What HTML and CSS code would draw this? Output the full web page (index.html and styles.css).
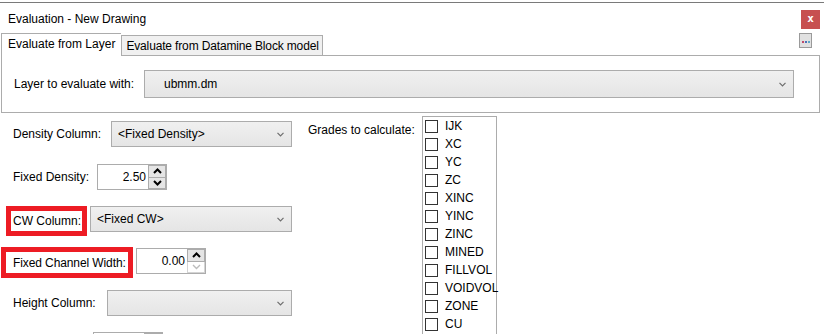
FILE: index.html
```html
<!DOCTYPE html>
<html lang="en">
<head>
  <meta charset="UTF-8" />
  <title>Evaluation - New Drawing</title>
  <link rel="stylesheet" href="styles.css">
</head>
<body>
  <div class="window">
    <div class="titlebar">
      <span class="title">Evaluation - New Drawing</span>
      <button class="close" title="Close">x</button>
    </div>

    <div class="tabs">
      <div class="tab active">Evaluate from Layer</div>
      <div class="tab">Evaluate from Datamine Block model</div>
      <button class="more" title="More"><i class="d1"></i><i class="d2"></i><i class="d3"></i></button>
    </div>

    <div class="panel">
      <span class="label layer-label">Layer to evaluate with:</span>
      <div class="combo wide"><span>ubmm.dm</span><svg class="chev" width="7" height="5" viewBox="0 0 7 5"><path d="M0.5 0.8 L3.5 3.8 L6.5 0.8" fill="none" stroke="#6d6d6d" stroke-width="1.2"/></svg></div>
    </div>

    <div class="content">
      <div class="form">
        <div class="row r-density">
          <span class="label">Density Column:</span>
          <div class="combo c-density"><span>&lt;Fixed Density&gt;</span><svg class="chev" width="7" height="5" viewBox="0 0 7 5"><path d="M0.5 0.8 L3.5 3.8 L6.5 0.8" fill="none" stroke="#6d6d6d" stroke-width="1.2"/></svg></div>
        </div>

        <div class="row r-fixed">
          <span class="label">Fixed Density:</span>
          <div class="spin s-density">
            <span class="value">2.50</span>
            <div class="arrows">
              <span class="arrow"><svg width="9" height="6" viewBox="0 0 9 6"><path d="M1 5 L4.5 1.5 L8 5" fill="none" stroke="#000" stroke-width="2"/></svg></span>
              <span class="arrow"><svg width="9" height="6" viewBox="0 0 9 6"><path d="M1 1 L4.5 4.5 L8 1" fill="none" stroke="#000" stroke-width="2"/></svg></span>
            </div>
          </div>
        </div>

        <div class="row r-cw">
          <span class="label marked m-cw">CW Column:</span>
          <div class="combo c-cw"><span>&lt;Fixed CW&gt;</span><svg class="chev" width="7" height="5" viewBox="0 0 7 5"><path d="M0.5 0.8 L3.5 3.8 L6.5 0.8" fill="none" stroke="#6d6d6d" stroke-width="1.2"/></svg></div>
        </div>

        <div class="row r-fcw">
          <span class="label marked m-fcw">Fixed Channel Width:</span>
          <div class="spin s-fcw">
            <span class="value">0.00</span>
            <div class="arrows">
              <span class="arrow"><svg width="9" height="6" viewBox="0 0 9 6"><path d="M1 5 L4.5 1.5 L8 5" fill="none" stroke="#000" stroke-width="2"/></svg></span>
              <span class="arrow off"><svg width="9" height="6" viewBox="0 0 9 6"><path d="M1 1 L4.5 4.5 L8 1" fill="none" stroke="#bcbcbc" stroke-width="1.4"/></svg></span>
            </div>
          </div>
        </div>

        <div class="row r-height">
          <span class="label">Height Column:</span>
          <div class="combo c-height"><span></span><svg class="chev" width="7" height="5" viewBox="0 0 7 5"><path d="M0.5 0.8 L3.5 3.8 L6.5 0.8" fill="none" stroke="#6d6d6d" stroke-width="1.2"/></svg></div>
        </div>

        <div class="row r-last">
          <div class="spin s-last">
            <span class="value"></span>
            <div class="arrows"><span class="arrow"></span></div>
          </div>
        </div>
      </div>

      <span class="label grades-label">Grades to calculate:</span>

      <div class="list">
        <label class="item"><span class="box"></span>IJK</label>
        <label class="item"><span class="box"></span>XC</label>
        <label class="item"><span class="box"></span>YC</label>
        <label class="item"><span class="box"></span>ZC</label>
        <label class="item"><span class="box"></span>XINC</label>
        <label class="item"><span class="box"></span>YINC</label>
        <label class="item"><span class="box"></span>ZINC</label>
        <label class="item"><span class="box"></span>MINED</label>
        <label class="item"><span class="box"></span>FILLVOL</label>
        <label class="item"><span class="box"></span>VOIDVOL</label>
        <label class="item"><span class="box"></span>ZONE</label>
        <label class="item"><span class="box"></span>CU</label>
      </div>
    </div>
  </div>
</body>
</html>
```

FILE: styles.css
```css
* {
  box-sizing: border-box;
}

body {
  margin: 0;
  padding-top: 2px;
  background: #fff;
  font-family: "Liberation Sans", Arial, sans-serif;
  font-size: 12px;
  color: #000;
  width: 824px;
  height: 334px;
  overflow: hidden;
}

.window {
  border-top: 1px solid #7a7a7a;
  height: 332px;
  overflow: hidden;
}

/* title bar */
.titlebar {
  height: 30px;
  display: flex;
  align-items: flex-start;
  justify-content: space-between;
}

.title {
  padding: 9px 0 0 8px;
}

.close {
  margin: 7px 4px 0 0;
  width: 19px;
  height: 19px;
  border: none;
  padding: 0 0 2px 0;
  background: #c75050;
  color: #fff;
  font-family: "DejaVu Sans Mono", monospace;
  font-weight: bold;
  font-size: 11px;
  line-height: 17px;
}

/* tabs */
.tabs {
  height: 22px;
  display: flex;
  align-items: flex-end;
  padding-left: 1px;
  position: relative;
  z-index: 1;
}

.tab {
  height: 20px;
  padding: 3px 3px 0 4px;
  background: #f0f0f0;
  border: 1px solid #acacac;
  border-bottom: none;
  letter-spacing: -0.15px;
}

.tab.active {
  height: 23px;
  margin-bottom: -1px;
  background: #fff;
  border-right: none;
  padding: 3px 6px 0 6px;
  align-self: flex-start;
  letter-spacing: 0;
}

.more {
  margin: 0 12px 0 auto;
  align-self: flex-start;
  width: 13px;
  height: 15px;
  padding: 0;
  border: 1px solid #9a9a9a;
  background: #e1e1e1;
  display: flex;
  align-items: center;
  justify-content: center;
  gap: 1px;
}

.more i {
  width: 2px;
  height: 2px;
  margin-top: 3px;
}

.d1 { background: #c04a6a; }
.d2 { background: #4c6fb8; }
.d3 { background: #5fa8c7; }

/* layer panel */
.panel {
  margin: 0 4px 0 1px;
  height: 58px;
  border: 1px solid #acacac;
  display: flex;
  align-items: center;
  padding-left: 12px;
}

.layer-label {
  width: 130px;
}

.combo {
  height: 26px;
  border: 1px solid #acacac;
  background: linear-gradient(#f0f0f0, #e5e5e5);
  display: flex;
  align-items: center;
  justify-content: space-between;
  padding: 0 7px 0 6px;
}

.combo.wide {
  width: 650px;
  height: 28px;
  padding-left: 19px;
}

.chev {
  flex: none;
}

/* lower form */
.content {
  display: flex;
  align-items: flex-start;
  height: 221px;
  overflow: hidden;
}

.form {
  width: 292px;
  display: flex;
  flex-direction: column;
}

.row {
  display: flex;
  align-items: center;
  padding-left: 13px;
}

.r-density { margin-top: 8px; }
.r-density .label { width: 98px; }
.c-density { width: 181px; }

.r-fixed { margin-top: 17px; }
.r-fixed .label { width: 84px; }

.r-cw {
  margin-top: 16px;
  padding-left: 6px;
  align-items: flex-start;
}
.c-cw { width: 202px; margin-left: 3px; }

.r-fcw {
  margin-top: 11px;
  padding-left: 1px;
  align-items: flex-start;
}
.s-fcw { margin: 1px 0 0 3px; }

.r-height { margin-top: 12px; }
.r-height .label { width: 94px; }
.c-height { width: 185px; }

.r-last { margin-top: 16px; padding-left: 93px; }

.marked {
  border: 5px solid #ed1c24;
  display: flex;
  align-items: center;
}

.m-cw {
  width: 81px;
  height: 30px;
  padding-left: 2px;
}

.m-fcw {
  width: 132px;
  height: 31px;
  padding-left: 7px;
  letter-spacing: -0.1px;
}

.spin {
  width: 70px;
  height: 26px;
  border: 1px solid #acacac;
  background: #fff;
  display: flex;
  align-items: stretch;
}

.spin .value {
  flex: 1;
  text-align: right;
  padding-right: 2px;
  line-height: 24px;
}

.arrows {
  width: 18px;
  display: flex;
  flex-direction: column;
}

.arrow {
  flex: 1;
  border: 1px solid #acacac;
  background: #e5e5e5;
  display: flex;
  align-items: center;
  justify-content: center;
}

.arrow + .arrow {
  border-top: none;
}

.arrow.off {
  background: #fff;
  border-color: #d4d4d4;
}

.s-last {
  width: 70px;
}

/* grades list */
.grades-label {
  margin: 10px 0 0 16px;
  width: 114px;
}

.list {
  margin-top: 3px;
  width: 75px;
  height: 230px;
  border: 1px solid #acacac;
  padding: 0 0 0 2px;
  display: flex;
  flex-direction: column;
}

.item {
  height: 18px;
  display: flex;
  align-items: center;
  white-space: nowrap;
}

.box {
  width: 13px;
  height: 13px;
  border: 1px solid #333;
  background: #fff;
  margin-right: 7px;
  flex: none;
}
```
